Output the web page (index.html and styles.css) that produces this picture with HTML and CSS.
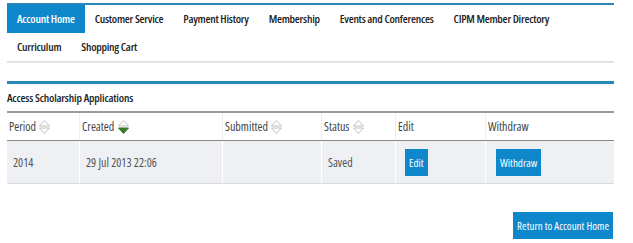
FILE: index.html
```html
<!DOCTYPE html>
<html lang="en">
<head>
    <meta charset="UTF-8">
    <title>Access Scholarship Applications</title>
    <link rel="stylesheet" href="styles.css">
</head>
<body>
    <div class="page">
        <nav class="tabs">
            <a href="#" class="tab active">Account Home</a>
            <a href="#" class="tab">Customer Service</a>
            <a href="#" class="tab">Payment History</a>
            <a href="#" class="tab">Membership</a>
            <a href="#" class="tab">Events and Conferences</a>
            <a href="#" class="tab">CIPM Member Directory</a>
            <a href="#" class="tab">Curriculum</a>
            <a href="#" class="tab">Shopping Cart</a>
        </nav>

        <section class="panel">
            <h2>Access Scholarship Applications</h2>
            <table class="grid">
                <thead>
                    <tr>
                        <th class="col-period">Period
                            <svg class="sort" viewBox="0 0 11 16"><path class="up" d="M0.5 7 L5.5 1.5 L10.5 7 Z"/><path class="down" d="M0.5 9 L5.5 14.5 L10.5 9 Z"/></svg>
                        </th>
                        <th class="col-created">Created
                            <svg class="sort" viewBox="0 0 11 16"><path class="up" d="M0.5 7 L5.5 1.5 L10.5 7 Z"/><path class="down active" d="M0.5 9 L5.5 14.5 L10.5 9 Z"/></svg>
                        </th>
                        <th class="col-submitted">Submitted
                            <svg class="sort" viewBox="0 0 11 16"><path class="up" d="M0.5 7 L5.5 1.5 L10.5 7 Z"/><path class="down" d="M0.5 9 L5.5 14.5 L10.5 9 Z"/></svg>
                        </th>
                        <th class="col-status">Status
                            <svg class="sort" viewBox="0 0 11 16"><path class="up" d="M0.5 7 L5.5 1.5 L10.5 7 Z"/><path class="down" d="M0.5 9 L5.5 14.5 L10.5 9 Z"/></svg>
                        </th>
                        <th class="col-edit">Edit</th>
                        <th class="col-withdraw">Withdraw</th>
                    </tr>
                </thead>
                <tbody>
                    <tr>
                        <td>2014</td>
                        <td>29 Jul 2013 22:06</td>
                        <td></td>
                        <td>Saved</td>
                        <td><button class="btn btn-edit">Edit</button></td>
                        <td><button class="btn btn-withdraw">Withdraw</button></td>
                    </tr>
                </tbody>
            </table>
        </section>

        <div class="actions">
            <button class="btn btn-return">Return to Account Home</button>
        </div>
    </div>
</body>
</html>
```

FILE: styles.css
```css
body {
    margin: 0;
    background: #fff;
    font-family: "Open Sans", "Roboto Condensed", sans-serif;
    font-stretch: 75%;
    font-size: 12px;
    color: #444;
}

.page {
    width: 607px;
    margin: 3px 0 0 7px;
}

/* Top navigation */
.tabs {
    display: flex;
    flex-wrap: wrap;
    border-top: 2px solid #2a88b8;
    border-bottom: 2px solid #e2e2e2;
}

.tab {
    display: block;
    height: 28px;
    line-height: 28px;
    padding: 0 10px;
    color: #222;
    text-decoration: none;
    font-size: 11.5px;
    font-weight: 600;
    letter-spacing: -0.25px;
}

.tab.active {
    background: #0e87cb;
    color: #fff;
}

/* Scholarship panel */
.panel {
    margin-top: 18px;
    border-top: 3px solid #2a88b8;
}

.panel h2 {
    margin: 0;
    padding: 6px 0 0 0;
    height: 21px;
    font-size: 11.5px;
    font-weight: 600;
    letter-spacing: -0.2px;
    color: #222;
}

.grid {
    width: 100%;
    border-collapse: collapse;
    border-top: 2px solid #9a9a9a;
}

.grid th {
    text-align: left;
    font-weight: normal;
    height: 27px;
    padding: 0 0 0 2px;
    border-bottom: 1px solid #888;
    border-left: 1px solid #eee;
    color: #444;
    white-space: nowrap;
}

.grid th:first-child,
.grid td:first-child {
    border-left: none;
}

.grid td {
    height: 42px;
    padding: 0 0 0 6px;
    background: #eef0f4;
    border-left: 1px solid #fff;
    border-bottom: 1px solid #d8dadd;
    color: #555;
}

.col-period { width: 70px; }
.col-created { width: 140px; }
.col-submitted { width: 96px; }
.col-status { width: 71px; }
.col-edit { width: 87px; }

/* Sort arrows */
.sort {
    width: 11px;
    height: 16px;
    vertical-align: middle;
    margin-left: 1px;
}

.sort path {
    fill: none;
    stroke: #c2c2c2;
    stroke-width: 1;
}

.sort path.active {
    fill: #3b7a2a;
    stroke: #3b7a2a;
}

/* Buttons */
.btn {
    border: none;
    background: #0e87cb;
    color: #fff;
    font-family: inherit;
    font-stretch: 75%;
    font-size: 11px;
    height: 27px;
    padding: 0 4px;
    cursor: pointer;
}

.btn-edit {
    margin-left: 3px;
}

.btn-withdraw {
    margin-left: 4px;
}

.actions {
    display: flex;
    justify-content: flex-end;
    padding: 28px 1px 0 0;
}
```
